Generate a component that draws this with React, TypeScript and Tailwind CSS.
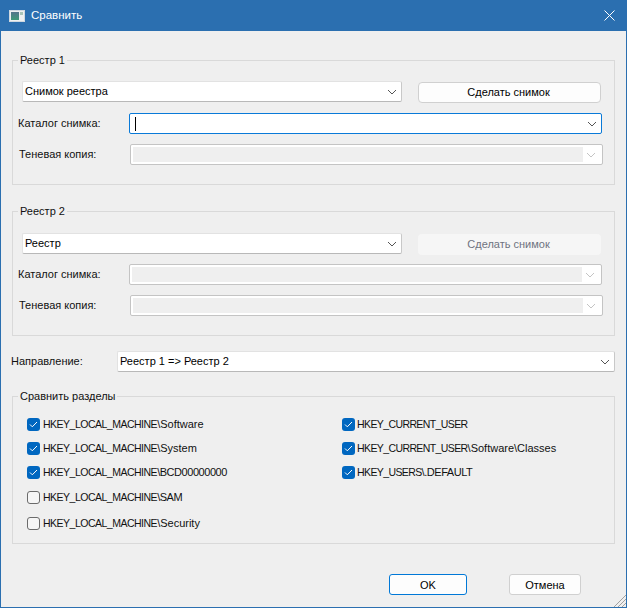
import React from 'react';

const Chevron = ({ disabled }: { disabled?: boolean }) => (
  <svg width="10" height="6" viewBox="0 0 10 6" fill="none" className={disabled ? 'stroke-[#c4c4c4]' : 'stroke-[#555555]'}>
    <path d="M1 1l4 4 4-4" strokeWidth="1" />
  </svg>
);

const Combo = ({ text, width, focused, disabled, caret }: { text?: string; width: string; focused?: boolean; disabled?: boolean; caret?: boolean }) => {
  let frame = 'border border-[#e2e2e2] border-b-[#b8b8b8] border-r-[#c8c8c8] pl-[2px]';
  if (focused) frame = 'border border-[#0a7ad8] text-[#0a7ad8]';
  if (disabled) frame = 'border border-[#c4c4c4] p-[2px]';

  return (
    <div className={`${width} ${frame} h-[21px] shrink-0 flex items-center bg-white rounded-[2px]`}>
      {disabled ? <div className="flex-1 h-full bg-[#efefef]" /> : (
        <div className="flex-1 flex items-center text-black">
          {caret && <div className="ml-[5px] w-px h-[14px] bg-black" />}
          {text}
        </div>
      )}
      <div className="w-[16px] flex justify-center mr-[1px]">
        <Chevron disabled={disabled} />
      </div>
    </div>
  );
};

const SnapButton = ({ disabled }: { disabled?: boolean }) => (
  <div
    className={`w-[183px] h-[21px] ml-[16px] mt-px pr-[2px] flex items-center justify-center rounded-[4px] ${
      disabled ? 'bg-[#f6f6f6] text-[#6f7380]' : 'bg-[#fdfdfd] border border-[#d0d0d0] text-black'
    }`}
  >
    Сделать снимок
  </div>
);

const Group = ({ title, className, children }: { title: string; className: string; children: React.ReactNode }) => (
  <div className={`relative ml-[11px] mr-[11px] border border-[#d9d9d9] ${className}`}>
    <span className="absolute left-[5px] top-[-8px] px-[2px] bg-[#efefef] leading-[14px] text-[#111111]">{title}</span>
    {children}
  </div>
);

const RegistryGroup = ({ title, comboText, active, className }: { title: string; comboText: string; active?: boolean; className: string }) => (
  <Group title={title} className={`h-[125px] flex flex-col ${className}`}>
    <div className={`flex pl-[9px] ${active ? 'pt-[20px]' : 'pt-[21px]'}`}>
      <Combo text={comboText} width="w-[380px]" />
      <SnapButton disabled={!active} />
    </div>
    <div className={`flex items-center pl-[5px] ${active ? 'mt-[10px]' : 'mt-[9px]'}`}>
      <span className="w-[111px] text-[#111111]">Каталог снимка:</span>
      {active ? <Combo width="w-[473px]" focused caret /> : <Combo width="w-[473px]" disabled />}
    </div>
    <div className="flex items-center mt-[10px] pl-[6px]">
      <span className="w-[111px] text-[#111111]">Теневая копия:</span>
      <Combo width="w-[473px]" disabled />
    </div>
  </Group>
);

const Check = ({ root, tail, checked, tight, right, className }: { root: string; tail?: string; checked?: boolean; tight?: boolean; right?: boolean; className?: string }) => (
  <div className={`flex items-center h-[14px] ${className ?? ''}`}>
    {checked ? (
      <div className="w-[13px] h-[13px] rounded-[3px] bg-[#0067c0] flex items-center justify-center shrink-0">
        <svg width="9" height="7" viewBox="0 0 9 7" fill="none" stroke="#ffffff" strokeWidth="1">
          <path d="M1 3.5l2.3 2.3L8 1" />
        </svg>
      </div>
    ) : (
      <div className="w-[13px] h-[13px] rounded-[3px] border border-[#6b6b6b] bg-[#f6f6f6] shrink-0" />
    )}
    <span className={`text-[#111111] whitespace-nowrap ${right ? 'ml-[2px]' : 'ml-[3px]'}`}>
      <span className={`text-[10.5px] ${right ? 'tracking-[-0.6px]' : 'tracking-[-0.5px]'}`}>{root}</span>
      <span className={tight ? 'tracking-[-0.45px]' : ''}>{tail}</span>
    </span>
  </div>
);

export default function App() {
  return (
    <div className="relative w-[627px] h-[608px] overflow-hidden flex flex-col bg-[#efefef] border-x border-b border-[#2b6fb0] text-[11px] font-['Liberation_Sans',sans-serif]">
      <div className="-mx-px h-[31px] shrink-0 bg-[#2b6fb0] flex items-center text-white text-[11.5px]">
        <svg width="16" height="12" viewBox="0 0 16 12" className="ml-[9px]">
          <defs>
            <linearGradient id="pane" x1="0" y1="0" x2="0" y2="1">
              <stop offset="0" stopColor="#55758c" />
              <stop offset="1" stopColor="#3f9a78" />
            </linearGradient>
          </defs>
          <rect x="0.5" y="0.5" width="15" height="11" fill="#eef0f1" stroke="#cfd8e0" />
          <rect x="2" y="2" width="8" height="8" fill="url(#pane)" />
          <rect x="11" y="2" width="3" height="3" fill="#a9c4b8" />
        </svg>
        <span className="ml-[6px]">Сравнить</span>
        <svg width="11" height="11" viewBox="0 0 11 11" className="ml-auto mr-[12px]" stroke="#ffffff" strokeWidth="1">
          <path d="M0.5 0.5l10 10M10.5 0.5l-10 10" />
        </svg>
      </div>

      <RegistryGroup title="Реестр 1" comboText="Снимок реестра" active className="mt-[29px]" />
      <RegistryGroup title="Реестр 2" comboText="Реестр" className="mt-[26px]" />

      <div className="flex items-center mt-[15px] pl-[10px]">
        <span className="w-[106px] text-[#111111]">Направление:</span>
        <Combo text="Реестр 1 => Реестр 2" width="w-[498px]" />
      </div>

      <Group title="Сравнить разделы" className="mt-[24px] h-[148px] flex pl-[14px] pt-[20px]">
        <div className="flex flex-col w-[315px]">
          <Check root="HKEY_LOCAL_MACHINE" tail="\Software" checked />
          <Check root="HKEY_LOCAL_MACHINE" tail="\System" checked className="mt-[10px]" />
          <Check root="HKEY_LOCAL_MACHINE" tail="\BCD00000000" checked tight className="mt-[10px]" />
          <Check root="HKEY_LOCAL_MACHINE" tail="\SAM" tight className="mt-[11px]" />
          <Check root="HKEY_LOCAL_MACHINE" tail="\Security" className="mt-[12px]" />
        </div>
        <div className="flex flex-col">
          <Check root="HKEY_CURRENT_USER" checked right />
          <Check root="HKEY_CURRENT_USER" tail="\Software\Classes" checked right className="mt-[10px]" />
          <Check root="HKEY_USERS" tail="\.DEFAULT" checked tight right className="mt-[10px]" />
        </div>
      </Group>

      <div className="flex mt-[30px] pl-[388px]">
        <div className="w-[78px] h-[21px] pt-px flex items-center justify-center rounded-[3px] bg-[#fdfdfd] border border-[#0078d7] text-black">OK</div>
        <div className="w-[72px] h-[21px] pt-px ml-[42px] flex items-center justify-center rounded-[3px] bg-[#fdfdfd] border border-[#d0d0d0] text-black">Отмена</div>
      </div>

      <svg width="12" height="12" viewBox="0 0 12 12" className="absolute right-0 bottom-0" stroke="#a0a0a0" strokeWidth="1" shapeRendering="crispEdges">
        <path d="M0 12L12 0M4 12l8-8M8 12l4-4" />
      </svg>
    </div>
  );
}
